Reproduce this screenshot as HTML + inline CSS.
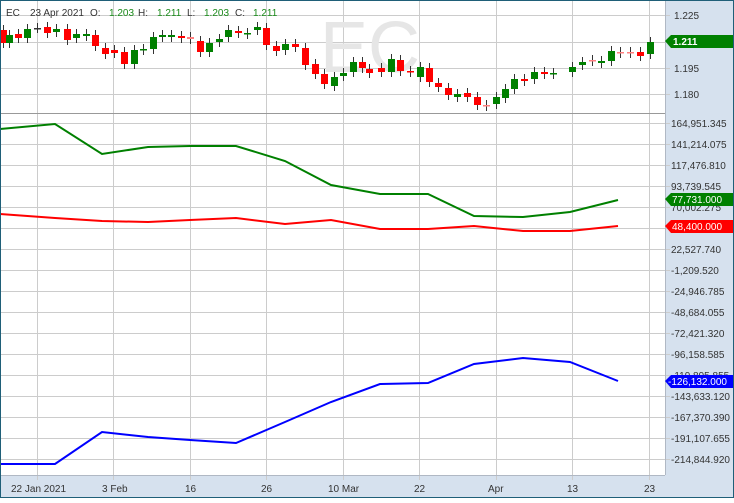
<!DOCTYPE html>
<html><head><meta charset="utf-8"><style>
body{margin:0;width:734px;height:498px;overflow:hidden;background:#fff;font-family:"Liberation Sans",sans-serif}
</style></head><body>
<svg width="734" height="498" xmlns="http://www.w3.org/2000/svg" font-family="Liberation Sans, sans-serif" font-size="10">
<rect x="0" y="0" width="734" height="498" fill="#fff"/>
<rect x="665" y="0" width="69" height="498" fill="#d6e1ee"/>
<rect x="0" y="475" width="734" height="23" fill="#d6e1ee"/>
<g stroke="#cccccc" stroke-width="1">
<line x1="37.5" y1="0" x2="37.5" y2="480"/><line x1="113.5" y1="0" x2="113.5" y2="480"/><line x1="190.5" y1="0" x2="190.5" y2="480"/><line x1="266.5" y1="0" x2="266.5" y2="480"/><line x1="343.5" y1="0" x2="343.5" y2="480"/><line x1="419.5" y1="0" x2="419.5" y2="480"/><line x1="496.5" y1="0" x2="496.5" y2="480"/><line x1="572.5" y1="0" x2="572.5" y2="480"/><line x1="649.5" y1="0" x2="649.5" y2="480"/>
<line x1="0" y1="15.5" x2="670" y2="15.5"/><line x1="0" y1="42.5" x2="670" y2="42.5"/><line x1="0" y1="68.5" x2="670" y2="68.5"/><line x1="0" y1="94.5" x2="670" y2="94.5"/>
</g>
<g id="lg" stroke="#cccccc"></g>
<line x1="0" y1="113.5" x2="665" y2="113.5" stroke="#999"/>
<line x1="665.5" y1="0" x2="665.5" y2="475" stroke="#b0b8c4"/>
<line x1="0" y1="475.5" x2="665" y2="475.5" stroke="#b0b8c4"/>
<text x="320" y="72" font-size="72" fill="#e6e6e6">EC</text>
<g id="cd"></g>
<polyline fill="none" stroke="#008000" stroke-width="2" points="0,129 55,124 102,154 148,147 190,146 236,146 285,161 331,185 380,194 428,194 474,216 523,217 570,212 618,200"/>
<polyline fill="none" stroke="#ff0000" stroke-width="2" points="0,214 55,218 102,221 148,222 190,220 236,218 285,224 331,220 380,229 428,229 474,226 523,231 570,231 618,226"/>
<polyline fill="none" stroke="#0000ff" stroke-width="2" points="0,464 55,464 102,432 148,437 190,440 236,443 285,422 331,402 380,384 428,383 474,364 523,358 570,362 618,381"/>
<g fill="#333" font-size="10">
<text x="6" y="16">EC</text><text x="30" y="16">23 Apr 2021</text><text x="90" y="16">O:</text><text x="138" y="16">H:</text><text x="187" y="16">L:</text><text x="235" y="16">C:</text>
</g>
<g fill="#1a8a1a" font-size="10"><text x="109" y="16">1.203</text><text x="157" y="16">1.211</text><text x="204" y="16">1.203</text><text x="253" y="16">1.211</text></g>
<g fill="#333" font-size="10" id="ax">
<text x="674" y="19">1.225</text><text x="674" y="72">1.195</text><text x="674" y="98">1.180</text>
<text x="671" y="127">164,951.345</text><text x="671" y="148">141,214.075</text><text x="671" y="169">117,476.810</text><text x="671" y="190">93,739.545</text><text x="671" y="211">70,002.275</text><text x="671" y="253">22,527.740</text><text x="671" y="274">-1,209.520</text><text x="671" y="295">-24,946.785</text><text x="671" y="316">-48,684.055</text><text x="671" y="337">-72,421.320</text><text x="671" y="358">-96,158.585</text><text x="671" y="379">-119,895.855</text><text x="671" y="400">-143,633.120</text><text x="671" y="421">-167,370.390</text><text x="671" y="442">-191,107.655</text><text x="671" y="463">-214,844.920</text>
<text x="11" y="492">22 Jan 2021</text><text x="102" y="492">3 Feb</text><text x="185" y="492">16</text><text x="261" y="492">26</text><text x="328" y="492">10 Mar</text><text x="414" y="492">22</text><text x="488" y="492">Apr</text><text x="567" y="492">13</text><text x="644" y="492">23</text>
</g>
<path d="M665,41 L671,35 L734,35 L734,48 L671,48 Z" fill="#008000"/><text x="673" y="45" fill="#fff" font-weight="bold">1.211</text>
<path d="M665,199 L671,193 L734,193 L734,206 L671,206 Z" fill="#008000"/><text x="672" y="203" fill="#fff">77,731.000</text>
<path d="M665,226 L671,220 L734,220 L734,233 L671,233 Z" fill="#ff0000"/><text x="672" y="230" fill="#fff">48,400.000</text>
<path d="M665,381 L671,375 L734,375 L734,388 L671,388 Z" fill="#0000ff"/><text x="668" y="385" fill="#fff">-126,132.000</text>
<rect x="0.5" y="0.5" width="733" height="497" fill="none" stroke="#1f5f78"/>
</svg>
<script>
var c=[[3,'r',30,43],[9,'g',35,43],[18,'r',34,38],[27,'g',29,38],[37,'x',28,28],[47,'r',27,33],[56,'g',29,32],[67,'r',29,40],[76,'g',34,38],[86,'g',34,36],[95,'r',35,46],[105,'r',48,54],[114,'r',50,53],[124,'r',52,64],[134,'g',50,64],[143,'g',49,50],[153,'g',37,49],[162,'g',35,37],[171,'g',35,37],[181,'r',36,38],[190,'p',37,39],[200,'r',41,52],[209,'g',43,52],[219,'g',39,42],[228,'g',30,37],[238,'r',31,33],[247,'g',33,34],[257,'g',27,30],[266,'r',28,45],[276,'r',46,51],[285,'g',44,50],[295,'r',44,47],[305,'r',48,65],[315,'r',64,74],[324,'r',74,84],[334,'g',77,86],[343,'g',73,76],[353,'g',62,72],[362,'r',62,68],[369,'r',69,73],[381,'r',68,72],[391,'g',59,72],[400,'r',60,71],[410,'r',71,72],[420,'g',67,77],[429,'r',68,82],[438,'r',83,87],[448,'r',88,95],[457,'g',94,97],[467,'r',93,97],[477,'r',97,105],[486,'p',105,106],[496,'g',97,104],[505,'g',89,98],[514,'g',79,89],[524,'r',79,81],[534,'g',72,79],[544,'r',72,74],[553,'g',73,74],[572,'g',67,72],[582,'g',62,65],[592,'p',60,61],[601,'g',61,63],[611,'g',51,61],[620,'p',52,53],[630,'p',52,53],[640,'r',52,56],[650,'g',42,54]];
var s='',ns='http://www.w3.org/2000/svg';
c.forEach(function(k){var x=k[0],t=k[2],b=k[3];var col=k[1]=='g'?'#008000':k[1]=='r'?'#ff0000':k[1]=='p'?'#ff8080':'#333';
s+='<line x1="'+(x+.5)+'" y1="'+(t-5)+'" x2="'+(x+.5)+'" y2="'+(b+5)+'" stroke="#333"/>';
var h=Math.max(b-t,1.5);s+='<rect x="'+(x-3)+'" y="'+t+'" width="7" height="'+h+'" fill="'+col+'"/>';});
document.getElementById('cd').innerHTML=s;
var g='';for(var i=0;i<17;i++){var y=123+i*21+.5;g+='<line x1="0" y1="'+y+'" x2="670" y2="'+y+'"/>';}
document.getElementById('lg').innerHTML=g;
</script>
</body></html>
